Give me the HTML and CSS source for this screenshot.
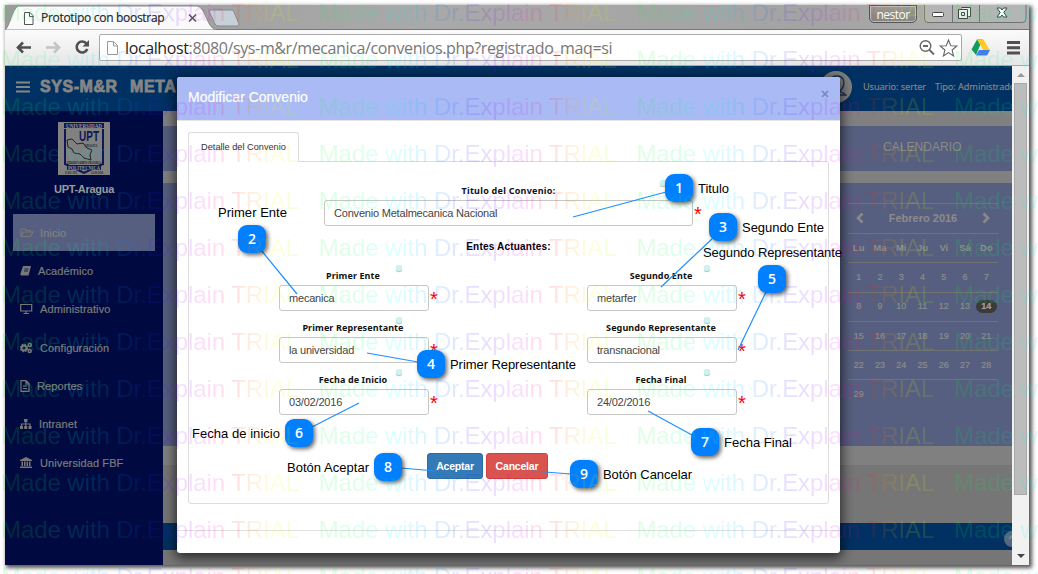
FILE: index.html
```html
<!DOCTYPE html>
<html lang="es">
<head>
<meta charset="utf-8">
<title>Prototipo con boostrap</title>
<link rel="stylesheet" href="styles.css">
</head>
<body>
<div class="window">
  <div class="tabstrip">
    <svg class="tabshape" width="245" height="25" viewBox="0 0 245 25">
      <path d="M0 25C5 21 7 4 13 1H192C201 2 201 22 211 25Z" fill="#fafafa" stroke="#888"/>
      <path d="M204 6q1-1 3-1h19q2 0 3 2l5 12q0 2-2 2h-18q-3 0-4-2z" fill="#c8d0d7" stroke="#858b90"/>
      <path d="M19.500 7.500h5.500l3 3v9h-8.500zM24.500 7.500v4h4" fill="#fff" stroke="#555"/>
      <path d="M184 9.500l7 7m0-7l-7 7" stroke="#555" stroke-width="1.500"/>
    </svg>
    <span class="tabtitle">Prototipo con boostrap</span>
    <span class="user">nestor</span>
    <svg class="winbtns" width="103" height="19" viewBox="0 0 103 19">
      <path d="M.5 0V14q0 3.500 3.500 3.500H98q4 0 4-3.500V0M28.500 0V17M55.500 0V17" fill="#b5b5b5" stroke="#727272"/>
      <rect x="8.500" y="7.500" width="11" height="4" rx="1" fill="#fff" stroke="#444"/>
      <path d="M37.500 2.500h9v9h-2M34.500 4.500h9v9h-9zM37.500 7.500h3v3h-3z" fill="#eee" stroke="#444"/>
      <path d="M73 3h3.500l1.500 2L79.500 3H83l-3.200 4.500L83 12h-3.500L78 10l-1.500 2H73l3.200-4.500z" fill="#fff" stroke="#40404c"/>
    </svg>
  </div>
  <div class="toolbar">
    <svg class="nav" width="90" height="34" viewBox="0 0 90 34">
      <g fill="none" stroke-width="2.600"><path d="M24 16.500H11m5-5l-5 5 5 5" stroke="#505050"/><path d="M39 16.500h13m-5-5l5 5-5 5" stroke="#c4c4c4"/><path d="M79.500 12.500a5.500 5.500 0 1 0 .8 5.500" stroke="#505050"/></g>
      <path d="M82 9v6.500h-6.500z" fill="#505050"/>
    </svg>
    <div class="address">
      <svg width="12" height="14" viewBox="0 0 12 14"><path d="M.5.500h6l4 4v9H.5zM6.500.500v4.500h4" fill="#fff" stroke="#999"/></svg>
      <span class="url"><b>localhost</b>:8080/sys-m&amp;r/mecanica/convenios.php?registrado_maq=si</span>
      <svg width="40" height="20" viewBox="0 0 40 20"><g fill="none" stroke="#666" stroke-width="1.400"><circle cx="7.500" cy="8" r="5.300"/><path d="M5 8h5M11.500 12l4.500 4.500" stroke-width="1.800"/><path d="M30.500 2l2.300 5.700 6 .3-4.700 4 1.500 6-5.100-3.400-5.100 3.400 1.500-6-4.700-4 6-.3z" stroke-width="1.100"/></g></svg>
    </div>
    <svg class="tools" width="52" height="24" viewBox="0 0 52 24">
      <path d="M8 3.500h5.500L7 19 2.500 13.500z" fill="#0f9d58"/><path d="M8 3.500h6.500l6.500 11h-6.500z" fill="#ffc928"/><path d="M10 14h11l-3 5.500H7z" fill="#3f80ee"/>
      <path d="M38 6.500h13M38 11.800h13M38 17.100h13" stroke="#505050" stroke-width="3"/>
    </svg>
  </div>
  <div class="viewport">
    <div class="page">
      <header class="topbar">
        <svg width="14" height="12" viewBox="0 0 14 12"><path d="M0 1.500h14M0 6h14M0 10.500h14" stroke="#858585" stroke-width="2"/></svg>
        <span class="brand">SYS-M&amp;R</span><span class="brand brand2">META</span>
        <svg class="avatar" width="32" height="32" viewBox="0 0 32 32"><circle cx="16" cy="16" r="16" fill="#818181"/><path d="M14 20c-6-6-5-15 3-15s9 9 3 15c0 2 4 1 6 4H8c2-3 6-2 6-4z" fill="none" stroke="#173457" stroke-width="1.300"/></svg>
        <span class="who">Usuario: serter</span><span class="who">Tipo: Administrador</span>
      </header>
      <div class="columns">
        <nav class="sidebar">
          <svg class="logo" width="52" height="53" viewBox="0 0 52 53">
            <rect width="52" height="53" fill="#818181"/>
            <path d="M7 7v35l9 4 10 5 10-5 9-4V7" fill="none" stroke="#101853" stroke-width="2"/>
            <path d="M6 1h40v5H6zM9 43h34v5H9z" fill="#101853"/>
            <text x="26" y="5.500" class="l1" textLength="36" lengthAdjust="spacingAndGlyphs">UNIVERSIDAD</text>
            <text x="31" y="19" class="l2" textLength="20" lengthAdjust="spacingAndGlyphs">UPT</text>
            <path d="M9 18l5-1 5 5 6-1 4 5 5 2-2 5 1 5-7-2-4-4-6-1-2-4-4-2z" fill="#818181" stroke="#222"/>
            <text x="33" y="24.500" class="l3" textLength="13" lengthAdjust="spacingAndGlyphs">ARAGUA</text>
            <text x="26" y="42" class="l3" textLength="34" lengthAdjust="spacingAndGlyphs">FEDERICO BRITO FIGUEROA</text>
            <text x="26" y="47.500" class="l1" textLength="32" lengthAdjust="spacingAndGlyphs">POLITECNICA</text>
            <text x="13" y="52" class="l4" textLength="12" lengthAdjust="spacingAndGlyphs">12 DIC 1976</text><text x="39" y="52" class="l4" textLength="12" lengthAdjust="spacingAndGlyphs">14-03-2010</text>
          </svg>
          <div class="uni">UPT-Aragua</div>
          <a class="item active"><svg width="14" height="12" viewBox="0 0 14 12"><path d="M1 9V2h4l1 1.500h4.500V5M1 9.500L3.500 5H13l-2.500 4.500z" class="o"/></svg><span style="margin-left:6px">Inicio</span></a>
          <a class="item"><svg width="14" height="12" viewBox="0 0 14 12"><path d="M3 1h8L8.500 10.500H1.500q-1.500 0-1-2z"/><path d="M4.500 4h4M4 6h4" stroke="#000a40" stroke-width=".8"/></svg><span style="margin-left:4px">Académico</span></a>
          <a class="item"><svg width="14" height="12" viewBox="0 0 14 12"><path d="M.7 1.500h11v6.500H.7zM3.500 10.500h5.500M6 8v2" class="o" stroke-width="1.600"/></svg><span style="margin-left:6px">Administrativo</span></a>
          <a class="item"><svg width="14" height="12" viewBox="0 0 14 12"><g class="o"><circle cx="4" cy="6" r="2.500" stroke-width="2"/><circle cx="4" cy="6" r="3.700" stroke-dasharray="1.500 1.400"/><circle cx="9.700" cy="3" r="1.500" stroke-width="1.600"/><circle cx="9.700" cy="9" r="1.500" stroke-width="1.600"/></g></svg><span style="margin-left:6px">Configuración</span></a>
          <a class="item"><svg width="14" height="12" viewBox="0 0 14 12"><path d="M1 .7h5L9 3.500v7.800H1zM6 1v3h3M3 6h4M3 8.500h4" class="o"/></svg><span style="margin-left:3px">Reportes</span></a>
          <a class="item"><svg width="14" height="12" viewBox="0 0 14 12"><path d="M4 1h3.500v3H4zM0 8h3v3H0zM4.200 8h3v3h-3zM8.500 8h3v3h-3z"/><path d="M5.700 3v5M1.500 8V6h8.500v2" class="o"/></svg><span style="margin-left:5px">Intranet</span></a>
          <a class="item"><svg width="14" height="12" viewBox="0 0 14 12"><path d="M0 3l6-3 6 3v1H0zM1.500 4.500h1.500V9H1.500zM4 4.500h1.500V9H4zM6.500 4.500H8V9H6.500zM9 4.500h1.500V9H9zM0 9.500h12V11H0z"/></svg><span style="margin-left:6px">Universidad FBF</span></a>
        </nav>
        <main class="main">
          <section class="upper">
            <div class="caltitle">CALENDARIO</div>
            <div class="calendar">
              <div class="month"><svg width="8" height="12" viewBox="0 0 8 12"><path d="M6.500 1.500L2 6l4.500 4.500"/></svg><span>Febrero 2016</span><svg width="8" height="12" viewBox="0 0 8 12"><path d="M1.500 1.500L6 6l-4.500 4.500"/></svg></div>
              <div class="week names"><b>Lu</b><b>Ma</b><b>Mi</b><b>Ju</b><b>Vi</b><b>Sá</b><b>Do</b></div>
              <div class="week"><i>1</i><i>2</i><i>3</i><i>4</i><i>5</i><i>6</i><i>7</i></div>
              <div class="week"><i>8</i><i>9</i><i>10</i><i>11</i><i>12</i><i>13</i><i class="today">14</i></div>
              <div class="week"><i>15</i><i>16</i><i>17</i><i>18</i><i>19</i><i>20</i><i>21</i></div>
              <div class="week"><i>22</i><i>23</i><i>24</i><i>25</i><i>26</i><i>27</i><i>28</i></div>
              <div class="week"><i>29</i></div>
            </div>
          </section>
          <footer class="foot"><svg width="16" height="16" viewBox="0 0 16 16"><circle cx="8" cy="8" r="8" fill="#53677e"/><path d="M5 8l3-3 3 3" stroke="#7d8b9b" fill="none" stroke-width="1.500"/></svg></footer>
        </main>
      </div>
    </div>
    <div class="scrollbar"><i class="up"></i><i class="thumb"></i><i class="down"></i></div>
  </div>
</div>

<div class="modal">
  <div class="mhead"><span>Modificar Convenio</span><svg width="8" height="8" viewBox="0 0 8 8"><path d="M1 1l6 6m0-6L1 7" stroke="#7787bb" stroke-width="1.700"/></svg></div>
  <div class="mbody">
    <div class="mtab">Detalle del Convenio</div>
    <div class="panel">
      <div class="field wide"><label>Titulo del Convenio:</label><div class="input">Convenio Metalmecanica Nacional</div><em>*</em><u></u></div>
      <div class="actors">Entes Actuantes:</div>
      <div class="grid">
        <div class="field"><label>Primer Ente</label><div class="input">mecanica</div><em>*</em><u></u></div>
        <div class="field"><label>Segundo Ente</label><div class="input">metarfer</div><em>*</em><u></u></div>
        <div class="field"><label>Primer Representante</label><div class="input">la universidad</div><em>*</em><u></u></div>
        <div class="field"><label>Segundo Representante</label><div class="input">transnacional</div><em>*</em><u></u></div>
        <div class="field"><label>Fecha de Inicio</label><div class="input">03/02/2016</div><em>*</em><u></u></div>
        <div class="field"><label>Fecha Final</label><div class="input">24/02/2016</div><em>*</em><u></u></div>
      </div>
      <div class="buttons"><span class="btn ok">Aceptar</span><span class="btn no">Cancelar</span></div>
    </div>
  </div>
  <div class="mfoot"></div>
</div>

<svg class="notes" width="1038" height="574" viewBox="0 0 1038 574">
  <g stroke="#1f8fff" stroke-width="1.200">
    <path d="M666 192L573 217M261 250L297 294M712 239L661 287M418 362L367 353M766 292L738 350M312 427L359 403M692 435L648 411M401 468L436 471M571 474L532 471"/>
  </g>
  <g class="badges">
    <rect x="665" y="174" width="28" height="28" rx="9"/><rect x="238" y="225" width="28" height="28" rx="9"/><rect x="709" y="213" width="28" height="28" rx="9"/><rect x="417" y="350" width="28" height="28" rx="9"/><rect x="758" y="265" width="28" height="28" rx="9"/><rect x="285" y="419" width="28" height="28" rx="9"/><rect x="691" y="428" width="28" height="28" rx="9"/><rect x="374" y="453" width="28" height="28" rx="9"/><rect x="570" y="460" width="28" height="28" rx="9"/>
  </g>
  <g class="nums">
    <text x="679" y="193">1</text><text x="252" y="244">2</text><text x="723" y="232">3</text><text x="431" y="369">4</text><text x="772" y="284">5</text><text x="299" y="438">6</text><text x="705" y="447">7</text><text x="388" y="472">8</text><text x="584" y="479">9</text>
  </g>
  <g class="notetext">
    <text x="698" y="193" textLength="31">Titulo</text>
    <text x="218" y="217" textLength="69">Primer Ente</text>
    <text x="742" y="232" textLength="82">Segundo Ente</text>
    <text x="703" y="257" textLength="139">Segundo Representante</text>
    <text x="450" y="369" textLength="126">Primer Representante</text>
    <text x="192" y="438" textLength="88">Fecha de inicio</text>
    <text x="724" y="447" textLength="68">Fecha Final</text>
    <text x="287" y="472" textLength="82">Botón Aceptar</text>
    <text x="603" y="479" textLength="89">Botón Cancelar</text>
  </g>
</svg>
<div class="watermark" id="watermark"></div>
<script src="watermark.js"></script>
</body>
</html>
```
FILE: styles.css
```css
* { box-sizing: border-box; }
body { margin: 0; width: 1038px; height: 574px; overflow: hidden; background: #fff; font-family: "Liberation Sans", Arial, sans-serif; padding: 5px; position: relative; }
.window { width: 1024px; height: 560px; display: flex; flex-direction: column; box-shadow: 2px 2px 4px 1px #555; }
.tabstrip { height: 25px; background: linear-gradient(90deg, #9b9b9b, #a9a9a9 40%, #a3a3a3 80%, #b2b2b2); border-bottom: 1px solid #777; position: relative; display: flex; align-items: flex-start; }
.tabshape { position: absolute; left: 0; top: 0; }
.tabtitle { position: relative; margin: 5px auto 0 36px; font: 12px/15px "Open Sans", sans-serif; letter-spacing: -.3px; color: #222; -webkit-text-stroke: .15px #222; }
.user { width: 48px; height: 18px; border: 1px solid #555; border-radius: 0 0 5px 5px; background: linear-gradient(#9a9a9a, #848484); box-shadow: inset 0 0 0 1px #bbb; color: #fff; font: 12px/17px "Open Sans", sans-serif; letter-spacing: -.5px; text-align: center; margin-right: 7px; }
.winbtns { margin-right: 2px; }
.toolbar { height: 36px; background: linear-gradient(#fbfbfb, #e6e6e6); display: flex; align-items: center; border-bottom: 1px solid #aaa; }
.nav { width: 94px; flex: none; }
.address { width: 863px; height: 27px; border: 1px solid #aaa; border-radius: 2px; background: #fff; display: flex; align-items: center; padding: 0 3px 0 7px; }
.url { margin-left: 6px; margin-right: auto; font: 16px/22px "Open Sans", sans-serif; color: #777; letter-spacing: -.38px; }
.url b { color: #222; font-weight: 400; }
.tools { margin-left: 7px; }
.viewport { flex: 1; display: flex; }
.page { width: 1007px; display: flex; flex-direction: column; overflow: hidden; }
.topbar { height: 45px; background: #003162; display: flex; align-items: center; padding: 0 0 3px 11px; white-space: nowrap; color: #858585; }
.brand { font-weight: 900; font-size: 16px; margin-left: 10px; width: 77px; letter-spacing: .55px; -webkit-text-stroke: .8px #858585; }
.brand2 { margin-left: 13px; }
.avatar { margin-left: auto; flex: none; }
.who { font: 9.200px/12px "Noto Sans", sans-serif; letter-spacing: -.08px; margin-left: 9px; -webkit-text-stroke: .15px #858585; }
.who:nth-of-type(3) { margin-left: 11px; }
.who:last-child { margin-right: -7px; }
.columns { flex: 1; display: flex; }
.sidebar { width: 158px; background: #000a40; display: flex; flex-direction: column; padding: 11px 8px 0; color: #777; }
.logo { align-self: center; text-anchor: middle; font-family: "Liberation Serif", serif; font-weight: 700; }
.l1 { font-size: 6px; fill: #999; }
.l2 { font: 700 14px "Liberation Sans", sans-serif; fill: #101853; }
.l3 { font-size: 4px; fill: #111; }
.l4 { font-size: 3px; fill: #222; }
.uni { text-align: center; font: 700 11px/14px "Liberation Sans", sans-serif; letter-spacing: -.3px; color: #9a9a9a; margin: 7px 0 18px; }
.item { height: 37px; margin-bottom: 1.400px; padding: 0 0 0 7px; display: flex; align-items: center; font-size: 11px; letter-spacing: .1px; color: #7b7b7b; -webkit-text-stroke: .2px #7b7b7b; }
.item svg { fill: #777; }
.o { fill: none; stroke: #777; stroke-width: 1.200; }
.active { background: #565f7f; color: #858585; }
.main { flex: 1; background: #767676; display: flex; flex-direction: column; }
.upper { height: 354px; padding-top: 15px; background: #808080; }
.caltitle { height: 45px; background: #565f7f; margin-bottom: 12px; padding-left: 720px; font: 12px/43px "Liberation Sans", sans-serif; letter-spacing: .05px; color: #8a8a8a; }
.calendar { height: 263px; background: #565f7f; padding: 20px 14px 0 685px; color: #8c8c8c; }
.month { height: 30px; border-top: 1px solid #737373; display: flex; justify-content: space-between; align-items: center; padding: 0 8px 2px; font-weight: 700; font-size: 11px; }
.month svg { fill: none; stroke: #8a8a8a; stroke-width: 2.600; }
.week { height: 29.300px; border-top: 1px solid #737373; display: grid; grid-template-columns: repeat(7, 1fr); align-items: center; justify-items: center; font-size: 9px; padding: 0 1px 1px 0; }
.week i { font-style: normal; -webkit-text-stroke: .2px #8c8c8c; }
.week.names { font-size: 9.500px; }
.week .today { background: #3b3b3b; color: #aaa; border-radius: 8px; width: 21px; line-height: 13px; text-align: center; font-weight: 700; }
.foot { margin-top: 58px; height: 27px; background: #003162; display: flex; justify-content: flex-end; align-items: center; padding-top: 4px; overflow: hidden; }
.foot svg { margin-right: -8px; flex: none; }
.scrollbar { width: 17px; background: #f1f1f1; display: flex; flex-direction: column; align-items: center; }
.up, .down { border: 4px solid transparent; }
.up { border-bottom-color: #999; border-top: 0; margin: 7px 0 6px; }
.thumb { width: 13px; height: 412px; background: #bcbcbc; border: 1px solid #a8a8a8; }
.down { border-top-color: #444; border-bottom: 0; margin-top: auto; margin-bottom: 7px; }

.modal { position: absolute; left: 177px; top: 77px; width: 663px; height: 476px; background: #fff; border-radius: 3px; box-shadow: 0 3px 12px 2px rgba(0,0,0,.65); display: flex; flex-direction: column; overflow: hidden; clip-path: inset(-12px -14px -12px -14px); }
.mhead { height: 44px; background: #a9baf5; border-bottom: 1px solid #e5e5e5; display: flex; justify-content: space-between; align-items: center; padding: 0 11px; color: #fff; font-size: 14px; }
.mhead span { padding-bottom: 3px; -webkit-text-stroke: .2px #fff; }
.mhead svg { margin-bottom: 10px; }
.mbody { padding: 11px 11px 0; height: 409px; }
.mtab { position: relative; width: 111px; height: 30px; border: 1px solid #ddd; border-bottom: 0; border-radius: 3px 3px 0 0; background: #fff; margin-bottom: -1px; font-size: 9.200px; line-height: 28px; text-align: center; color: #333; white-space: nowrap; }
.panel { height: 343px; border: 1px solid #ddd; border-radius: 0 3px 3px 3px; padding-top: 22px; }
.field { position: relative; width: 150px; height: 52px; }
.field label { display: block; text-align: center; font: 700 9px/14px "Noto Sans", sans-serif; letter-spacing: .1px; color: #111; margin-bottom: 2px; padding-right: 2px; white-space: nowrap; }
.field.wide label { letter-spacing: .25px; padding-right: 0; }
.wide { width: 369px; margin-left: 135px; }
.input { height: 26px; border: 1px solid #c6c6c6; border-radius: 3px; padding-left: 9px; font-size: 11px; line-height: 24px; letter-spacing: -.2px; color: #444; }
.field em { position: absolute; left: 100%; margin-left: 1px; top: 19px; font: 20px/22px "Liberation Sans", sans-serif; color: #f00; }
.field u { position: absolute; width: 6px; height: 6px; border-radius: 2px; background: #cbf3ef; box-shadow: 0 1px 1px #bbb; right: 27px; top: -4px; }
.actors { text-align: center; font: 700 10px/14px "Liberation Sans", sans-serif; letter-spacing: .2px; color: #000; margin: 4px 0 15px; }
.grid { display: grid; grid-template-columns: 150px 150px; column-gap: 158px; margin-left: 90px; }
.buttons { display: flex; gap: 3px; margin: 28px 0 0 238px; }
.btn { height: 26px; width: 56px; border-radius: 3px; color: #fff; font: 700 10.500px/24px "Liberation Sans", sans-serif; letter-spacing: -.2px; text-align: center; }
.ok { background: #337ab7; border: 1px solid #2e6da4; }
.no { width: 62px; background: #d9534f; border: 1px solid #d43f3a; }
.mfoot { height: 23px; border-top: 1px solid #e0e0e0; }
.notes { position: absolute; left: 0; top: 0; }
.badges { fill: #0080ff; filter: drop-shadow(2px 2px 2px rgba(0,0,0,.6)); }
.nums { font: 600 14px "Open Sans", sans-serif; fill: #fff; text-anchor: middle; }
.notetext { font: 13px "Liberation Sans", sans-serif; fill: #000; }
.watermark { position: absolute; left: 1px; top: 0; width: 1037px; height: 574px; overflow: hidden; display: grid; grid-template-columns: repeat(4, 317.700px); grid-auto-rows: 47px; opacity: .13; }
.watermark span { justify-self: start; align-self: start; font: 24px/26px "Liberation Sans", sans-serif; letter-spacing: -.07px; white-space: nowrap; color: transparent; background: linear-gradient(90deg, #0f2, #0f6 12%, #0ff 26%, #08f 40%, #40f 54%, #b0f 63%, #f0d 70%, #f02 78%, #f80 84%, #ff0 92%, #8f0); -webkit-background-clip: text; background-clip: text; }
```
FILE: watermark.js
```js
// Tiles the trial notice: 13 rows of 4 copies.
const layer = document.getElementById('watermark');
for (let i = 0; i < 52; i++) {
  const mark = document.createElement('span');
  mark.textContent = 'Made with Dr.Explain TRIAL';
  layer.appendChild(mark);
}
```
